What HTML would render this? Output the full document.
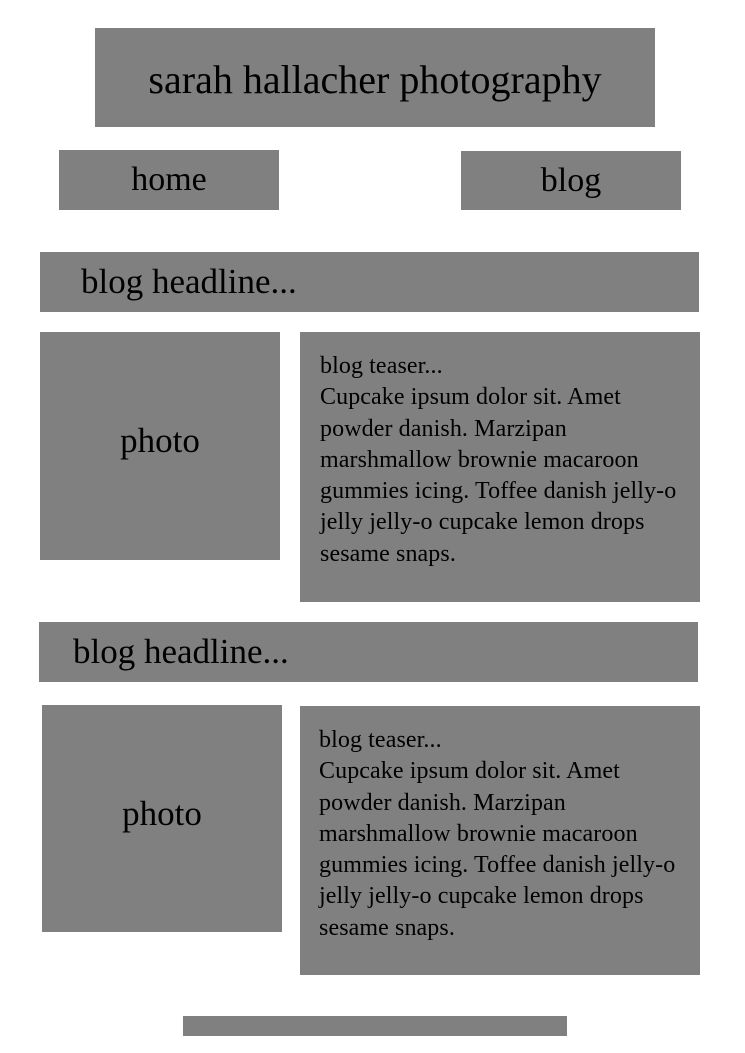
<!DOCTYPE html>
<html><head><meta charset="utf-8"><style>
body{margin:0;width:745px;height:1053px;background:#fff;position:relative;font-family:"Liberation Serif",serif;color:#000;overflow:hidden}
.b{position:absolute;background:#808080}
.c{display:flex;align-items:center;justify-content:center}
.t{font-size:24px;line-height:31.3px;padding:19px 0 0 20px;box-sizing:border-box;letter-spacing:0.1px;white-space:nowrap}
</style></head><body>
<div class="b c" style="left:95px;top:28px;width:560px;height:99px;font-size:40px;padding-top:4px;box-sizing:border-box">sarah hallacher photography</div>
<div class="b c" style="left:59px;top:150px;width:220px;height:60px;font-size:34px">home</div>
<div class="b c" style="left:461px;top:151px;width:220px;height:59px;font-size:34px">blog</div>
<div class="b" style="left:40px;top:252px;width:659px;height:60px;font-size:35px;line-height:60px;padding-left:41px;box-sizing:border-box">blog headline...</div>
<div class="b c" style="left:40px;top:332px;width:240px;height:228px;font-size:35px;padding-bottom:10px;box-sizing:border-box">photo</div>
<div class="b t" style="left:300px;top:332px;width:400px;height:270px">blog teaser...<br>Cupcake ipsum dolor sit. Amet<br>powder danish. Marzipan<br>marshmallow brownie macaroon<br>gummies icing. Toffee danish jelly-o<br>jelly jelly-o cupcake lemon drops<br>sesame snaps.</div>
<div class="b" style="left:39px;top:622px;width:659px;height:60px;font-size:35px;line-height:60px;padding-left:34px;box-sizing:border-box">blog headline...</div>
<div class="b c" style="left:42px;top:705px;width:240px;height:227px;font-size:35px;padding-bottom:10px;box-sizing:border-box">photo</div>
<div class="b t" style="left:300px;top:706px;width:400px;height:269px;padding-left:19px">blog teaser...<br>Cupcake ipsum dolor sit. Amet<br>powder danish. Marzipan<br>marshmallow brownie macaroon<br>gummies icing. Toffee danish jelly-o<br>jelly jelly-o cupcake lemon drops<br>sesame snaps.</div>
<div class="b" style="left:183px;top:1016px;width:384px;height:20px"></div>
</body></html>
